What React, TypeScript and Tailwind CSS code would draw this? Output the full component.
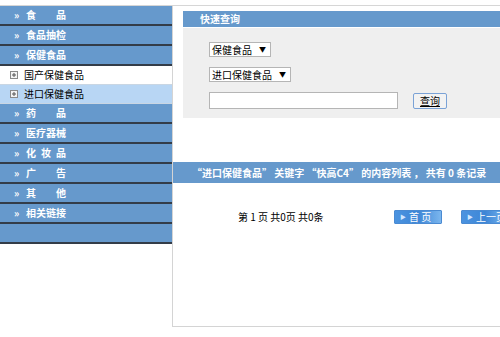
import React from "react";

const FONT = { fontFamily: '"Noto Sans CJK SC", "Liberation Sans", sans-serif' };

function BlueRow({ label }: { label: string }) {
  return (
    <div className="h-[20px] bg-[#6699cc] border-b-2 border-b-[#333c48] flex items-center pl-[14px] text-white font-bold text-[10px] leading-none">
      {label ? <span className="w-[12px] text-[10px]">»</span> : null}
      <span className="whitespace-pre">{label}</span>
    </div>
  );
}

function PlusBox() {
  return (
    <svg width="8" height="8" viewBox="0 0 8 8" className="shrink-0">
      <rect x="0.5" y="0.5" width="7" height="7" fill="#f4f4f4" stroke="#8a8a8a" />
      <path d="M2 4h4M4 2v4" stroke="#555" strokeWidth="1" />
    </svg>
  );
}

function SubRow({ label, active }: { label: string; active?: boolean }) {
  return (
    <div
      className={
        "h-[19px] flex items-center pl-[10px] gap-[6px] text-[10px] text-black leading-none border-b border-b-[#c9d6e3] " +
        (active ? "bg-[#b8d6f4]" : "bg-white")
      }
    >
      <PlusBox />
      <span>{label}</span>
    </div>
  );
}

function FakeSelect({ label, width }: { label: string; width: string }) {
  return (
    <div
      className={
        "h-[15px] bg-white border border-[#b5b5b5] flex items-center justify-between pl-[2px] pr-[4px] text-[10px] text-black leading-none " +
        width
      }
    >
      <span>{label}</span>
      <span className="text-[7px]">▼</span>
    </div>
  );
}

function PageButton({ label }: { label: string }) {
  return (
    <div className="h-[14px] w-[48px] shrink-0 rounded-[1px] border border-[#4a8ad2] bg-gradient-to-r from-[#4b93e0] via-[#3d86d6] to-[#7bb6ee] flex items-center pl-[5px] text-white text-[10px] leading-none">
      <span className="text-[6px] text-[#cfe6ff] mr-[3px]">▶</span>
      <span className="whitespace-pre">{label}</span>
    </div>
  );
}

export default function App() {
  return (
    <div className="w-[500px] h-[337px] bg-white overflow-hidden" style={FONT}>
      <div className="h-[5px]" />
      <div className="flex border-t border-t-[#d6d6d6]">
        <div className="w-[172px] shrink-0 flex flex-col">
          <BlueRow label={"食\u3000\u3000品"} />
          <BlueRow label="食品抽检" />
          <BlueRow label="保健食品" />
          <SubRow label="国产保健食品" />
          <SubRow label="进口保健食品" active />
          <BlueRow label={"药\u3000\u3000品"} />
          <BlueRow label="医疗器械" />
          <BlueRow label={"化\u2002妆\u2002品"} />
          <BlueRow label={"广\u3000\u3000告"} />
          <BlueRow label={"其\u3000\u3000他"} />
          <BlueRow label="相关链接" />
          <BlueRow label="" />
        </div>
        <div className="flex-1 h-[321px] border-l border-b border-[#d4d4d4] flex flex-col">
          <div className="ml-[10px] mt-[5px]">
            <div className="h-[16px] bg-[#6699cc] flex items-center pl-[17px] text-white font-bold text-[10px] leading-none">
              快速查询
            </div>
            <div className="h-[1px] bg-white" />
            <div className="h-[90px] bg-[#efefef] pl-[26px] pt-[14px] flex flex-col gap-[10px]">
              <FakeSelect label="保健食品" width="w-[62px]" />
              <FakeSelect label="进口保健食品" width="w-[82px]" />
              <div className="flex items-center">
                <div className="w-[189px] h-[17px] bg-white border border-[#b5b5b5]" />
                <div className="ml-[15px] w-[34px] h-[16px] bg-[#f2f2f2] border border-[#7aa2d6] rounded-[2px] flex items-center justify-center text-[10px] text-black leading-none">
                  <span className="underline">查询</span>
                </div>
              </div>
            </div>
          </div>
          <div className="mt-[44px] h-[21px] bg-[#6699cc] flex items-center pl-[19px] text-white font-bold text-[10px] leading-none whitespace-pre">
            {"“进口保健食品” 关键字 “快高C4” 的内容列表 ， 共有 0 条记录"}
          </div>
          <div className="mt-[27px] flex items-center">
            <span className="ml-[65px] w-[156px] text-[10px] text-black leading-none whitespace-pre">
              {"第 1 页 共0页 共0条"}
            </span>
            <PageButton label={"首 页"} />
            <div className="ml-[19px]">
              <PageButton label="上一页" />
            </div>
          </div>
        </div>
      </div>
    </div>
  );
}
